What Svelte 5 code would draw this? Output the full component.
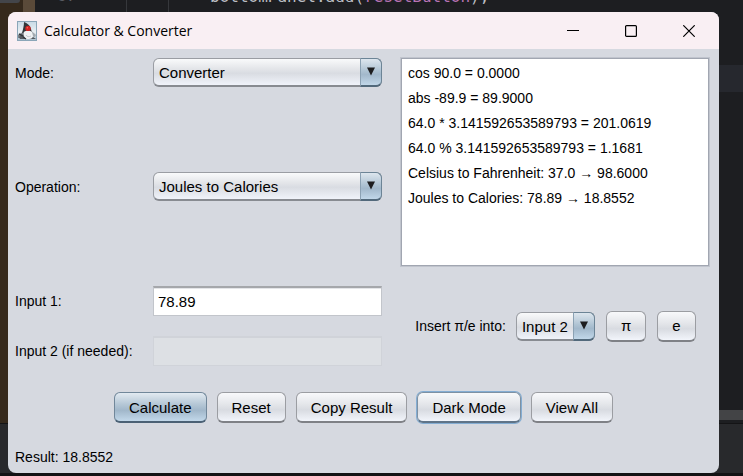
<script>
  const modes = ['Calculator', 'Converter'];
  const operations = ['Celsius to Fahrenheit', 'Joules to Calories'];
  const targets = ['Input 1', 'Input 2'];
  const history = [
    'cos 90.0 = 0.0000',
    'abs -89.9 = 89.9000',
    '64.0 * 3.141592653589793 = 201.0619',
    '64.0 % 3.141592653589793 = 1.1681',
    'Celsius to Fahrenheit: 37.0 → 98.6000',
    'Joules to Calories: 78.89 → 18.8552'
  ];

  let mode = $state('Converter');
  let operation = $state('Joules to Calories');
  let target = $state('Input 2');
  let input1 = $state('78.89');
  let input2 = $state('');
</script>

{#snippet combo(id, options, value, change)}
  <div class="combo">
    <select {id} {value} onchange={(e) => change(e.currentTarget.value)}>
      {#each options as option}
        <option value={option}>{option}</option>
      {/each}
    </select>
    <span class="arrow" aria-hidden="true">
      <svg width="10" height="10" viewBox="0 0 10 10"><path d="M1 0.5h8L5 8.5z" fill="#1d1d1f" /></svg>
    </span>
  </div>
{/snippet}

<div class="desktop">
  <div class="backdrop" aria-hidden="true">
    <div class="tab"></div>
    <div class="edge"></div>
    <div class="editor">
      <span class="line-number">67</span>
      <code>bottomPanel.add(<i>resetButton</i>);</code>
      <div class="guide first"></div>
      <div class="guide second"></div>
      <div class="current-line"></div>
    </div>
    <div class="scrollbar"></div>
    <div class="tool-pane"></div>
  </div>

  <main class="window">
    <header>
      <svg class="logo" width="20" height="20" viewBox="0 0 20 20" aria-hidden="true">
        <defs>
          <linearGradient id="sky" x1="0" y1="0" x2="0" y2="1">
            <stop offset="0" stop-color="#c9dae6" />
            <stop offset="0.55" stop-color="#e9eff3" />
            <stop offset="1" stop-color="#a9bfce" />
          </linearGradient>
        </defs>
        <rect x="0.5" y="0.5" width="19" height="19" fill="url(#sky)" stroke="#8ba6b8" />
        <path d="M1 14l5-3 2 1v5H1z" fill="#7b8187" />
        <path d="M2 16c2-2 4-2 6-1l8 1 3 2H3z" fill="#54595f" />
        <path d="M14 10c2 1 3 2 5 4l-1 2-4-1z" fill="#a4abb1" />
        <path d="M7 1c3 1 6 3 7 7l1 4-6-1-4 1c1-4 2-7 2-11z" fill="#33373b" />
        <path d="M7 11c2-2 6-2 8 0l1 4c0 2-2 3-4 3H9c-2-2-3-4-2-7z" fill="#f0f2f4" />
        <path d="M9 14c1 2 3 2 5 1" fill="none" stroke="#c5cacf" />
        <path d="M2 13l4 2M6 16l3 2" stroke="#34383c" stroke-width="1.4" />
        <circle cx="11" cy="7.4" r="2.7" fill="#d42424" />
        <circle cx="10.4" cy="6.7" r="0.8" fill="#f26a5c" />
      </svg>
      <h1>Calculator &amp; Converter</h1>
      <div class="controls">
        <button aria-label="Minimize">
          <svg width="12" height="12" viewBox="0 0 12 12"><path d="M0 5.5h12" stroke="#000" /></svg>
        </button>
        <button aria-label="Maximize">
          <svg width="12" height="12" viewBox="0 0 12 12"><rect x="0.6" y="0.6" width="10.8" height="10.8" rx="1" fill="none" stroke="#000" stroke-width="1.2" /></svg>
        </button>
        <button aria-label="Close">
          <svg width="12" height="12" viewBox="0 0 12 12"><path d="M0.3 0.3l11.4 11.4M11.7 0.3L0.3 11.7" stroke="#000" stroke-width="1.2" /></svg>
        </button>
      </div>
    </header>

    <div class="content">
      <div class="form">
        <label for="mode">Mode:</label>
        {@render combo('mode', modes, mode, (v) => (mode = v))}
        <label for="operation">Operation:</label>
        {@render combo('operation', operations, operation, (v) => (operation = v))}
        <label for="input1">Input 1:</label>
        <input id="input1" type="text" bind:value={input1} />
        <label for="input2">Input 2 (if needed):</label>
        <input id="input2" type="text" bind:value={input2} disabled />
      </div>

      <div class="side">
        <ul class="history">
          {#each history as entry}
            <li>{entry}</li>
          {/each}
        </ul>
        <div class="insert">
          <label for="target">Insert π/e into:</label>
          {@render combo('target', targets, target, (v) => (target = v))}
          <button class="push">π</button>
          <button class="push">e</button>
        </div>
      </div>
    </div>

    <div class="actions">
      <button class="push default">Calculate</button>
      <button class="push">Reset</button>
      <button class="push">Copy Result</button>
      <button class="push focused">Dark Mode</button>
      <button class="push">View All</button>
    </div>

    <output class="result">Result: 18.8552</output>
  </main>
</div>

<style>
  :global(body) {
    margin: 0;
    background: #1c1d20;
  }

  .desktop {
    position: relative;
    box-sizing: border-box;
    min-height: 100vh;
    padding: 12px 24px 3px 8px;
    display: flex;
    overflow: hidden;
    font-family: 'Liberation Sans', Arial, sans-serif;
    font-size: 15px;
    color: #000;
  }

  /* editor behind the dialog */
  .backdrop {
    position: absolute;
    inset: 0;
    background: #35291c;
  }
  .tab {
    position: absolute;
    top: 0;
    left: 0;
    width: 20px;
    height: 3px;
    background: #43454a;
    border-bottom-right-radius: 3px;
  }
  .edge {
    position: absolute;
    top: 0;
    left: 23px;
    width: 12px;
    height: 12px;
    background: #5a4a39;
  }
  .editor {
    position: absolute;
    inset: 0 0 0 35px;
    background: #1d1e21;
  }
  .line-number,
  code {
    position: absolute;
    top: -13px;
    font: 16px/20px 'DejaVu Sans Mono', monospace;
    color: #bcbec4;
    white-space: pre;
  }
  .line-number {
    left: 22px;
    top: -14px;
    color: #5a5d64;
  }
  code {
    left: 175px;
  }
  code i {
    font-style: normal;
    color: #b873b5;
  }
  .guide {
    position: absolute;
    top: 0;
    width: 1px;
    height: 12px;
    background: #36383c;
  }
  .first {
    left: 91px;
  }
  .second {
    left: 133px;
  }
  .current-line {
    position: absolute;
    top: 65px;
    right: 0;
    width: 50px;
    height: 27px;
    background: #26282e;
  }
  .scrollbar {
    position: absolute;
    right: 0;
    bottom: 56px;
    width: 50px;
    height: 10px;
    background: #434446;
  }
  .tool-pane {
    position: absolute;
    left: 0;
    right: 0;
    bottom: 0;
    height: 53px;
    box-sizing: border-box;
    border-top: 1px solid #141416;
    border-bottom: 3px solid #121214;
    background: #28292c;
  }

  .window {
    position: relative;
    flex: 1;
    display: flex;
    flex-direction: column;
    border-radius: 8px;
    overflow: hidden;
    background: #d6d9e0;
  }

  header {
    display: flex;
    align-items: center;
    height: 37px;
    padding-left: 9px;
    background: #f9eff3;
  }
  h1 {
    flex: 1;
    margin: 0 0 0 7px;
    font: 14px/20px 'Open Sans', 'Segoe UI', sans-serif;
  }
  .controls {
    display: flex;
    gap: 12px;
    padding-right: 7px;
  }
  .controls button {
    display: grid;
    place-items: center;
    width: 46px;
    height: 36px;
    padding: 0;
    border: 0;
    background: none;
  }

  .content {
    display: grid;
    grid-template-columns: 367px 1fr;
    column-gap: 20px;
    padding: 9px 10px 0 7px;
  }
  .form {
    display: grid;
    grid-template-columns: 138px 1fr;
    grid-template-rows: 114px 114px 50px 30px;
    align-items: start;
  }
  label {
    font-size: 14px;
    line-height: 30px;
    white-space: nowrap;
  }

  .combo {
    position: relative;
    height: 29px;
  }
  select {
    appearance: none;
    display: block;
    box-sizing: border-box;
    width: 100%;
    height: 29px;
    padding: 1px 28px 0 5px;
    border: 1px solid #9a9da3;
    border-bottom: 2px solid #888b91;
    border-radius: 6px;
    background: linear-gradient(#f9fafb, #e2e4e8 40%, #d9dce2 55%, #f0f3fa);
    font: inherit;
    color: #000;
    outline: none;
  }
  .arrow {
    position: absolute;
    top: 0;
    right: 0;
    box-sizing: border-box;
    display: grid;
    place-items: center;
    width: 22px;
    height: 29px;
    border: 1px solid #6c8496;
    border-bottom: 2px solid #52697b;
    border-left-color: #8ba1b3;
    border-radius: 0 6px 6px 0;
    background: linear-gradient(#dde6ee, #afc3d3 45%, #a2b8cb 60%, #c1d7e9);
    pointer-events: none;
  }

  input {
    box-sizing: border-box;
    width: 100%;
    height: 30px;
    padding: 0 4px;
    border: 1px solid #c2c5cb;
    border-top: 2px solid #a5a7ab;
    background: #fff;
    box-shadow: inset 0 1px #e4e5e8;
    font: inherit;
    color: #000;
    outline: none;
  }
  input:disabled {
    border-color: #d0d3d9;
    background: #dde0e4;
    box-shadow: none;
  }

  .side {
    display: flex;
    flex-direction: column;
  }
  .history {
    box-sizing: border-box;
    height: 208px;
    margin: 0 0 0 -1px;
    padding: 2px 6px;
    border: 1px solid #a1a6b1;
    box-shadow: 0 0 0 1px #c0c4cd;
    background: #fff;
    list-style: none;
    font-size: 14px;
    line-height: 25px;
    white-space: nowrap;
    overflow: hidden;
  }
  .insert {
    display: flex;
    align-items: center;
    justify-content: center;
    height: 120px;
    margin-bottom: -20px;
  }
  .insert .combo {
    width: 79px;
    margin: 0 11px 0 10px;
  }
  .insert select {
    padding-right: 0;
  }
  .insert .push + .push {
    margin-left: 11px;
  }

  .push {
    box-sizing: border-box;
    height: 31px;
    padding: 0 14px;
    border: 1px solid #9b9da2;
    border-bottom: 2px solid #7f8186;
    border-radius: 6px;
    background: linear-gradient(#f8f9fb, #e4e6ea 40%, #d8dbe1 60%, #f2f5fb);
    font: inherit;
    color: #000;
  }
  .default {
    border-color: #71879a;
    border-bottom-color: #4b6175;
    background: linear-gradient(#e2eaf1, #b5c7d6 40%, #a1b7ca 62%, #c2d8ea);
  }
  .focused {
    border-color: #7e91a3;
    border-bottom-color: #5f7488;
    box-shadow: 0 0 0 1px #84add3;
  }

  .actions {
    display: flex;
    justify-content: center;
    gap: 10px;
    margin-top: 26px;
  }
  .result {
    margin: 20px 7px 0;
    font-size: 14px;
    line-height: 28px;
  }
</style>
